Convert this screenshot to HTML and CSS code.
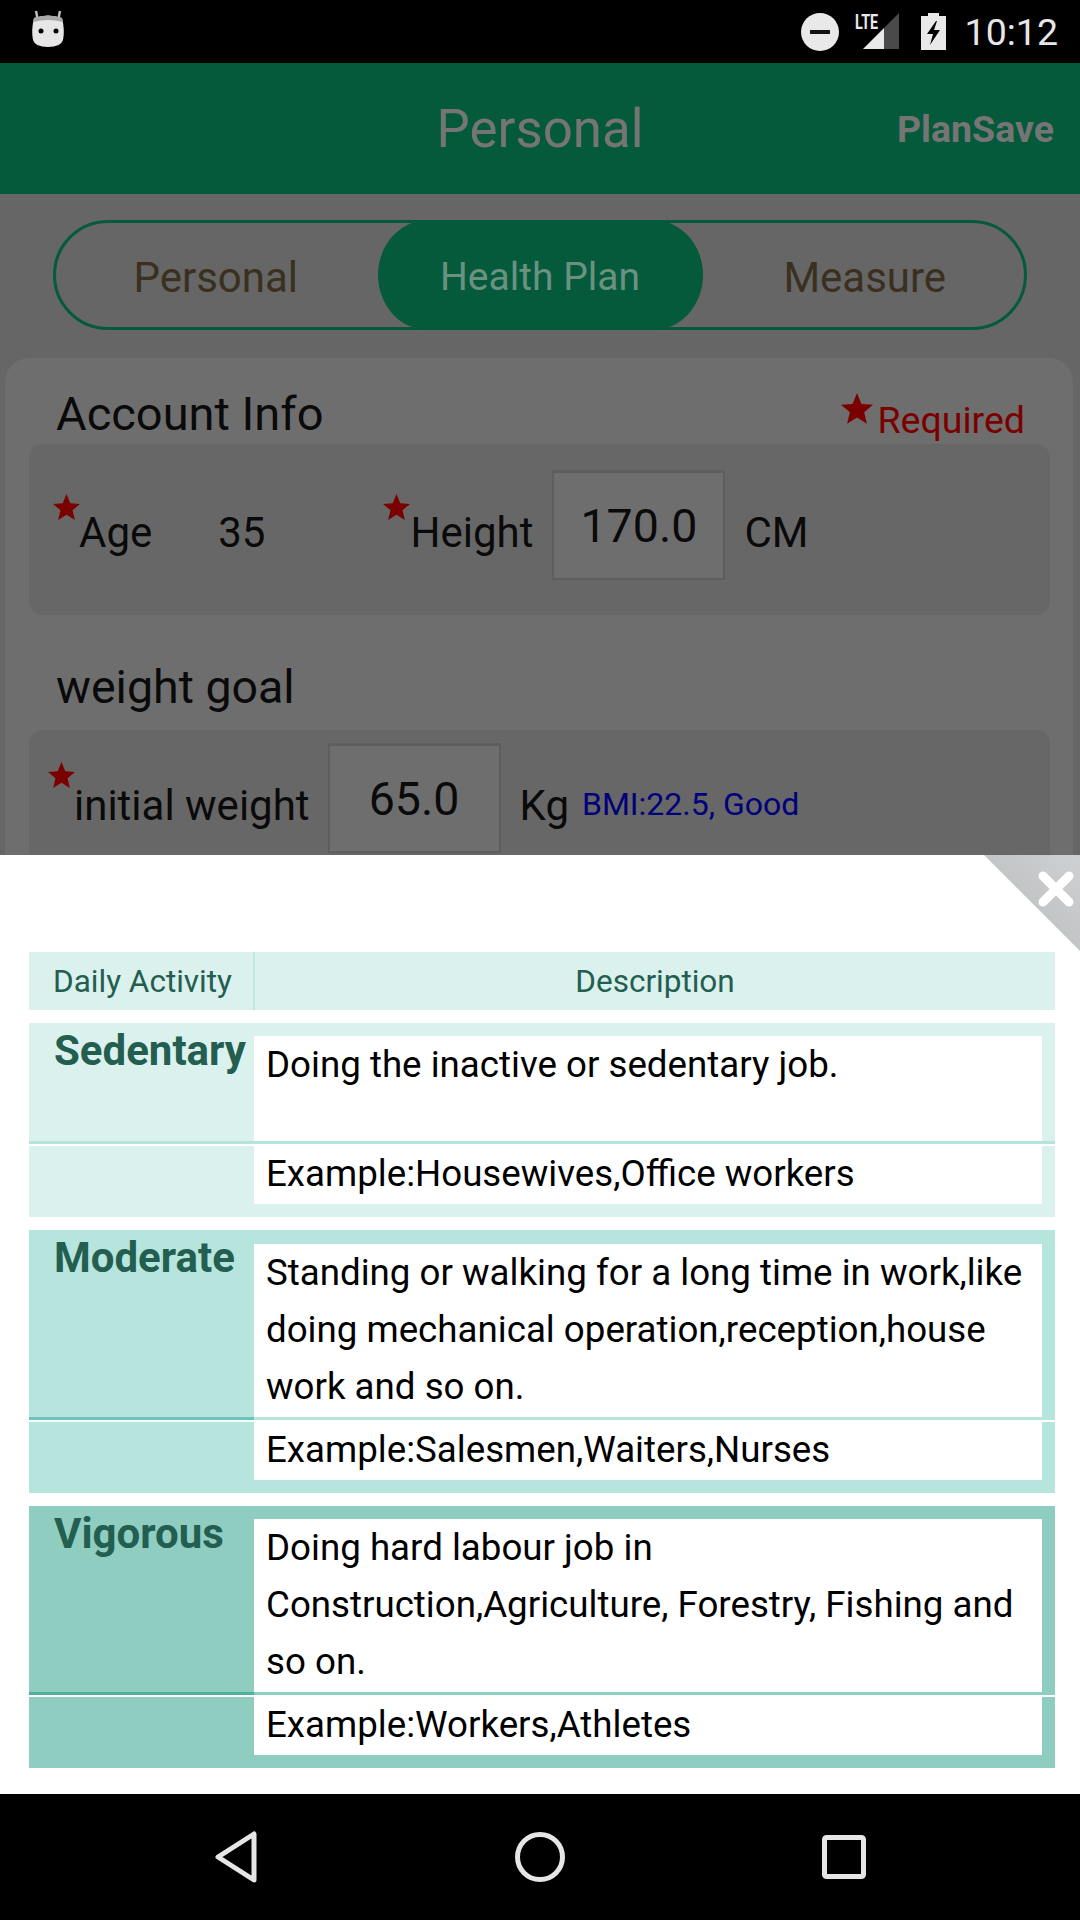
FILE: index.html
```html
<!DOCTYPE html>
<html lang="en">
<head>
    <meta charset="UTF-8">
    <meta name="viewport" content="width=device-width, initial-scale=1.0">
    <title>Personal</title>
    <link rel="stylesheet" href="styles.css">
</head>
<body>
    <svg width="0" height="0" class="defs">
        <symbol id="star" viewBox="0 0 30 30">
            <path d="M15 0l4.2 10.2 10.8.8-8.3 7 2.6 10.8L15 23l-9.300 5.800 2.600-10.800-8.300-7 10.800-.800z"/>
        </symbol>
    </svg>

    <!-- status bar -->
    <div class="status-bar">
        <svg class="status-app" width="34" height="38" viewBox="0 0 34 38">
            <path d="M7 11L5 1M27 11l2-10" stroke="#bdbdbd" stroke-width="2.500" fill="none"/>
            <path d="M3 8Q17 3 31 8Q34 20 32 30Q30 37 17 37Q4 37 2 30Q0 20 3 8z" fill="#e6e6e6"/>
            <path d="M3 8Q17 3 31 8L32 12Q17 8 2 12z" fill="#a8a8a8"/>
            <circle cx="10" cy="21" r="2.500" fill="#000"/>
            <circle cx="25" cy="21" r="2.500" fill="#000"/>
        </svg>
        <div class="status-right">
            <svg width="38" height="38" viewBox="0 0 38 38">
                <circle cx="19" cy="19" r="19" fill="#e9e9e9"/>
                <rect x="9" y="17" width="20" height="4" fill="#111"/>
            </svg>
            <div class="signal">
                <span class="lte">LTE</span>
                <svg width="38" height="37" viewBox="0 0 38 37">
                    <path d="M1 36L22 15V36z" fill="#e9e9e9"/>
                    <path d="M22 15L37 0V36H22z" fill="#4a4a4a"/>
                </svg>
            </div>
            <svg class="battery" width="25" height="37" viewBox="0 0 25 37">
                <path d="M7 0h11v3h7v34H0V3h7z" fill="#e9e9e9"/>
                <path d="M15 8L6 21h6l-3 11 10-15h-6l3-9z" fill="#000"/>
            </svg>
            <span class="clock">10:12</span>
        </div>
    </div>

    <!-- page behind the sheet -->
    <div class="backdrop">
        <div class="app-bar">
            <span class="app-title">Personal</span>
            <span class="app-action">PlanSave</span>
        </div>
        <div class="tabs">
            <div class="tab tab-left">Personal</div>
            <div class="tab tab-active">Health Plan</div>
            <div class="tab tab-right">Measure</div>
        </div>
        <div class="card">
            <div class="card-head">
                <span class="card-title">Account Info</span>
                <span class="required"><svg class="star-big"><use href="#star"/></svg>Required</span>
            </div>
            <div class="panel">
                <svg class="star star-age"><use href="#star"/></svg>
                <span class="label">Age</span>
                <span class="label age-value">35</span>
                <svg class="star star-height"><use href="#star"/></svg>
                <span class="label">Height</span>
                <div class="num-box height-box">170.0</div>
                <span class="label unit">CM</span>
            </div>
            <div class="card-title goal-title">weight goal</div>
            <div class="panel panel-goal">
                <svg class="star star-weight"><use href="#star"/></svg>
                <span class="label">initial weight</span>
                <div class="num-box weight-box">65.0</div>
                <span class="label unit">Kg</span>
                <span class="bmi">BMI:22.5, Good</span>
            </div>
        </div>
    </div>

    <!-- activity sheet -->
    <div class="sheet">
        <div class="close-corner">
            <svg class="close-x" width="36" height="36" viewBox="0 0 36 36">
                <path d="M5 5L31 31M31 5L5 31" stroke="#fff" stroke-width="9" stroke-linecap="round"/>
            </svg>
        </div>
        <div class="sheet-head">
            <div class="head-cell head-name">Daily Activity</div>
            <div class="head-cell head-desc">Description</div>
        </div>

        <div class="activity level-1">
            <div class="activity-top">
                <div class="activity-name">Sedentary</div>
                <div class="activity-text">Doing the inactive or sedentary job.</div>
            </div>
            <div class="activity-bottom">
                <div class="activity-side"></div>
                <div class="activity-example">Example:Housewives,Office workers</div>
            </div>
        </div>

        <div class="activity level-2">
            <div class="activity-top">
                <div class="activity-name">Moderate</div>
                <div class="activity-text">Standing or walking for a long time in work,like doing mechanical operation,reception,house work and so on.</div>
            </div>
            <div class="activity-bottom">
                <div class="activity-side"></div>
                <div class="activity-example">Example:Salesmen,Waiters,Nurses</div>
            </div>
        </div>

        <div class="activity level-3">
            <div class="activity-top">
                <div class="activity-name">Vigorous</div>
                <div class="activity-text">Doing hard labour job in Construction,Agriculture, Forestry, Fishing and so on.</div>
            </div>
            <div class="activity-bottom">
                <div class="activity-side"></div>
                <div class="activity-example">Example:Workers,Athletes</div>
            </div>
        </div>
    </div>

    <!-- nav bar -->
    <div class="nav-bar">
        <svg width="46" height="54" viewBox="0 0 46 54">
            <path d="M40 4V50L4 27z" fill="none" stroke="#e6e6e6" stroke-width="5" stroke-linejoin="round"/>
        </svg>
        <svg width="50" height="50" viewBox="0 0 50 50">
            <circle cx="25" cy="25" r="22.500" fill="none" stroke="#e6e6e6" stroke-width="5"/>
        </svg>
        <svg width="44" height="44" viewBox="0 0 44 44">
            <rect x="2.500" y="2.500" width="39" height="39" rx="2" fill="none" stroke="#e6e6e6" stroke-width="5"/>
        </svg>
    </div>
</body>
</html>
```

FILE: styles.css
```css
* {
    box-sizing: border-box;
}
body {
    margin: 0;
    width: 1080px;
    height: 1920px;
    overflow: hidden;
    font-family: Roboto, "Liberation Sans", sans-serif;
    background-color: #000;
}
.defs {
    position: absolute;
}

/* status bar */
.status-bar {
    height: 63px;
    background-color: #000;
    display: flex;
    justify-content: space-between;
    align-items: center;
    padding: 0 22px 0 31px;
}
.status-app {
    margin-top: -5px;
}
.status-right {
    display: flex;
    align-items: center;
}
.signal {
    position: relative;
    margin-left: 13px;
    width: 48px;
    height: 37px;
    display: flex;
    justify-content: flex-end;
}
.lte {
    position: absolute;
    left: 3px;
    top: -3px;
    color: #e9e9e9;
    font-size: 20px;
    font-weight: 700;
    transform: scaleX(0.72);
    transform-origin: left top;
}
.battery {
    margin-left: 21px;
}
.clock {
    margin-left: 19px;
    color: #e6e6e6;
    font-size: 37.500px;
}

/* page behind */
.backdrop {
    height: 792px;
    overflow: hidden;
    background-color: #666;
}
.app-bar {
    height: 131px;
    background-color: #055a3b;
    position: relative;
    display: flex;
    align-items: center;
    justify-content: center;
    color: #757575;
}
.app-title {
    font-size: 52.800px;
}
.app-action {
    position: absolute;
    right: 26px;
    font-size: 37.500px;
    font-weight: 700;
}
.tabs {
    margin: 26px 53px 0;
    height: 110px;
    border: 3px solid #055a3b;
    border-radius: 55px;
    display: grid;
    grid-template-columns: 1fr 325px 1fr;
    color: #3a3020;
    font-size: 42px;
}
.tab {
    display: flex;
    align-items: center;
    justify-content: center;
    padding-top: 4px;
}
.tab-left {
    padding-right: 2px;
}
.tab-right {
    padding-left: 3px;
}
.tab-active {
    margin: -3px 0;
    background-color: #055a3b;
    border-radius: 50px / 55px;
    color: #6b9281;
    font-size: 39px;
}
.card {
    margin: 28px 7px 0 5px;
    height: 600px;
    background-color: #6e6e6e;
    border-radius: 24px;
}
.card-head {
    height: 86px;
    padding: 0 48px 0 51px;
    display: flex;
    justify-content: space-between;
    align-items: flex-start;
}
.card-title {
    font-size: 47px;
    line-height: 54px;
    color: #0a0a0a;
    margin-top: 29px;
}
.goal-title {
    height: 115px;
    margin: 0;
    padding: 45px 0 0 51px;
    font-size: 46.500px;
}
.required {
    display: flex;
    align-items: flex-start;
    color: #7a0000;
    font-size: 37.500px;
    line-height: 42px;
    margin-top: 41px;
}
.star-big {
    width: 32px;
    height: 32px;
    margin: -6px 5px 0 0;
    fill: #7a0000;
}
.panel {
    margin: 0 23px 0 24px;
    height: 171px;
    padding: 26px 0 0 24px;
    display: flex;
    align-items: flex-start;
    background-color: #676767;
    border-radius: 14px;
    color: #0a0a0a;
}
.panel-goal {
    padding: 13px 0 0 19px;
}
.star {
    width: 27px;
    height: 27px;
    flex: none;
    fill: #7a0000;
    margin-top: 24px;
}
.star-age,
.star-weight {
    margin-right: -1px;
}
.star-weight {
    margin-top: 19px;
}
.label {
    font-size: 42px;
    line-height: 48px;
    margin-top: 39px;
}
.age-value {
    margin-left: 66px;
}
.star-height {
    margin-left: 118px;
}
.num-box {
    width: 173px;
    height: 110px;
    border: 2px solid #5e5e5e;
    border-top-width: 3px;
    background-color: #6e6e6e;
    font-size: 46.500px;
    line-height: 106px;
    text-align: center;
}
.height-box {
    margin-left: 19px;
}
.weight-box {
    margin-left: 18px;
}
.unit {
    margin-left: 19px;
}
.bmi {
    margin: 43px 0 0 13px;
    font-size: 32px;
    line-height: 36px;
    color: #00007a;
}

/* sheet */
.sheet {
    position: relative;
    height: 939px;
    background-color: #fff;
    padding: 97px 25px 0 29px;
}
.close-corner {
    position: absolute;
    top: 0;
    right: 0;
    width: 96px;
    height: 96px;
    background: linear-gradient(to bottom left, #cfd0d2, #b8b9bb);
    clip-path: polygon(0 0, 100% 0, 100% 100%);
}
.close-x {
    position: absolute;
    top: 16px;
    right: 6px;
}
.sheet-head {
    height: 58px;
    display: grid;
    grid-template-columns: 226px 1fr;
    font-size: 31.500px;
    color: #235e50;
    background-color: #dbf1ed;
}
.head-cell {
    display: flex;
    align-items: center;
    justify-content: center;
}
.head-name {
    padding-left: 3px;
    border-right: 2px solid #bfe8e1;
}
.activity {
    margin-top: 13px;
    background-color: var(--level);
}
.level-1 {
    --level: #dbf1ed;
    --rule: #b5e4dd;
    --line: #b5e4dd;
}
.level-2 {
    --level: #b6e5de;
    --rule: #6cc5ba;
    --line: #b6e5de;
}
.level-3 {
    --level: #8ecdc0;
    --rule: #4fb09d;
    --line: #8ecdc0;
}
.activity-top,
.activity-bottom {
    display: grid;
    grid-template-columns: 225px 1fr;
    font-size: 36.700px;
    color: #000;
}
.activity-top {
    border-bottom: 3px solid var(--line);
}
.activity-name {
    padding: 4px 0 0 25px;
    font-size: 42px;
    line-height: 48px;
    font-weight: 700;
    color: #235e50;
    border-bottom: 3px solid var(--rule);
    margin-bottom: -3px;
}
.activity-text {
    margin: 13px 13px 0 0;
    padding: 0 4px 2px 12px;
    background-color: #fff;
    line-height: 57px;
}
.level-1 .activity-text {
    height: 105px;
}
.level-2 .activity-text {
    margin-top: 14px;
}
.activity-bottom {
    border-top: 2px solid #fff;
    padding-bottom: 13px;
}
.activity-side {
    margin-bottom: -13px;
}
.activity-example {
    margin-right: 13px;
    padding: 0 0 3px 12px;
    background-color: #fff;
    line-height: 55px;
}

/* nav bar */
.nav-bar {
    height: 126px;
    background-color: #000;
    display: flex;
    align-items: center;
    padding-left: 214px;
}
.nav-bar svg:nth-child(2) {
    margin-left: 255px;
}
.nav-bar svg:nth-child(3) {
    margin-left: 257px;
}
```
